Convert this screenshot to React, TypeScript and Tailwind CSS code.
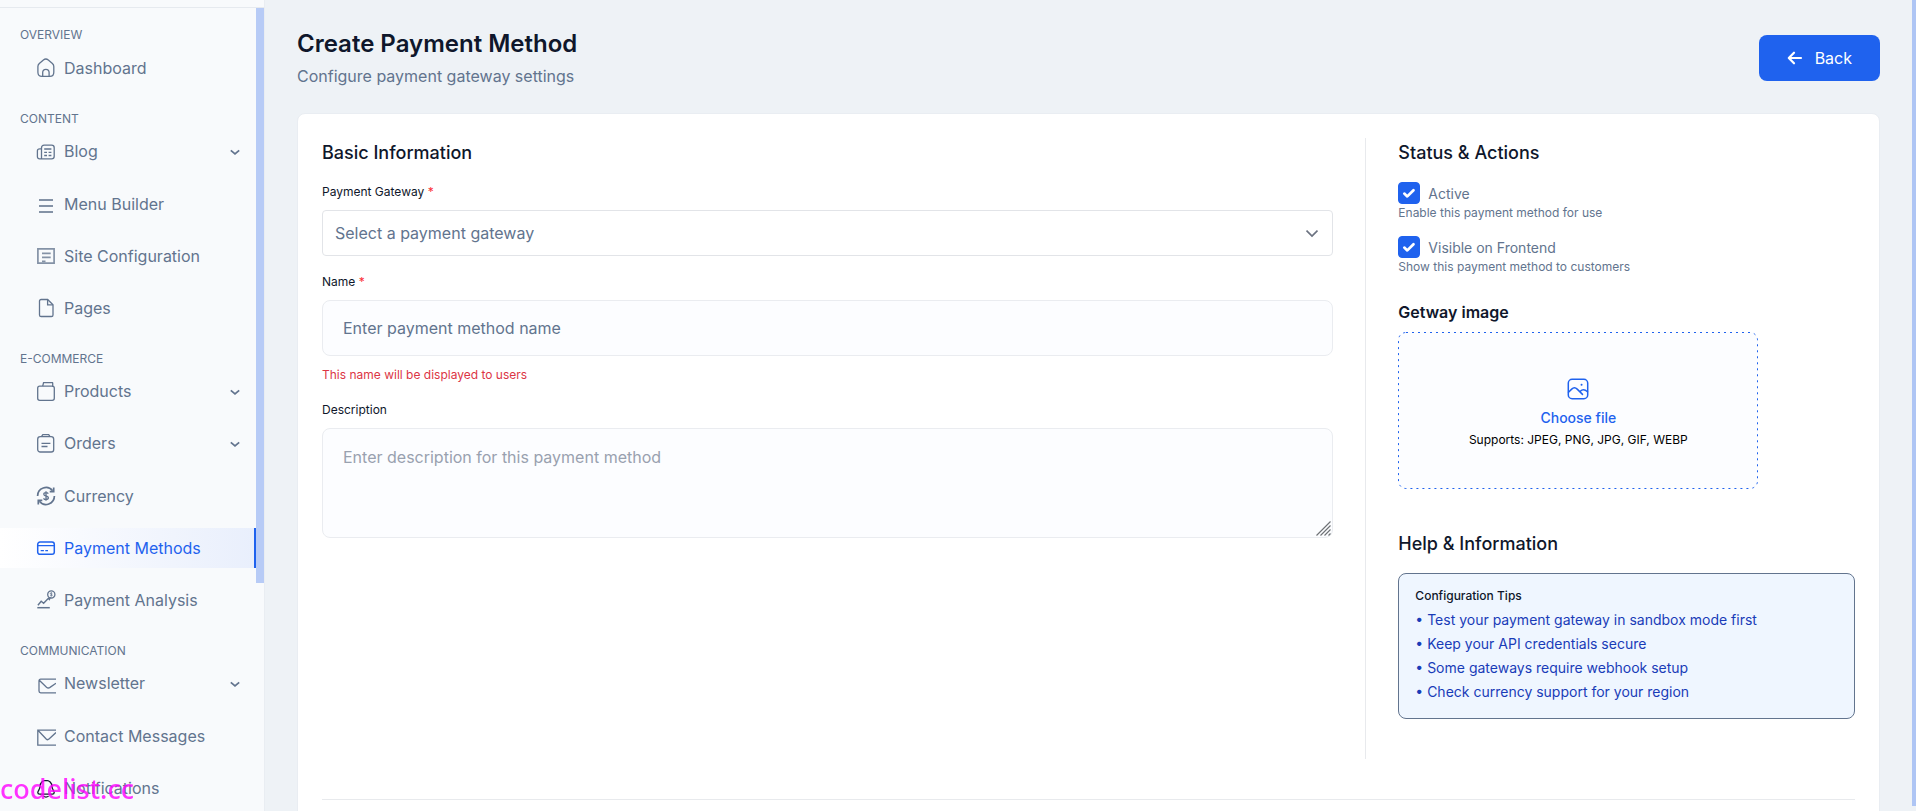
import { useState } from 'react'
import type { ReactNode } from 'react'

const icons: Record<string, ReactNode> = {
  home: (
    <>
      <path d="M1.9 8.6c0-1.2.5-2.2 1.4-3L7.4 2c1.5-1.2 3.4-1.2 4.9 0l4.1 3.6c.9.8 1.4 1.8 1.4 3v5.6c0 2.4-1.4 4.2-4 4.2H5.9c-2.600 0-4-1.800-4-4.200z" />
      <path d="M6.700 18.200v-3.700a3.200 3.200 0 0 1 6.400 0v3.700" />
    </>
  ),
  news: (
    <>
      <path d="M5.500 16.900V5.800c0-1.700 1-2.600 2.600-2.600h7.500c1.700 0 2.600.9 2.600 2.600v8.400c0 1.700-.9 2.600-2.600 2.600H3.600c-1.300 0-2.200-.9-2.200-2.300V8.800c0-1.300.8-1.900 2.300-1.900h1.800" />
      <path d="M8.200 7h7.200M8.200 10.300h2.800M12.600 10.300h2.800M8.200 13.500h2.800M12.600 13.500h2.800" />
    </>
  ),
  menu: <path d="M3 6h14M3 12h14M3 18h14" strokeWidth="1.900" />,
  site: (
    <>
      <path d="M1.900 2.800h16.200v14.400H1.900z" strokeWidth="1.700" />
      <path d="M6 7.300h8.700M6 11.300h8.700M6 15.300h3.500" strokeWidth="1.700" />
    </>
  ),
  page: (
    <>
      <path d="M11.600 1.500H5.100c-1 0-1.600.6-1.600 1.600v13.800c0 1 .6 1.600 1.600 1.600h10.300c1 0 1.600-.6 1.600-1.600V6.800z" />
      <path d="M11.600 1.500v5.300H17" />
    </>
  ),
  box: (
    <>
      <rect x="1.700" y="4.200" width="16.600" height="14.100" rx="2" />
      <path d="M6.700 4.200l.8-3.200c0-.3.300-.5.600-.5h8c.3 0 .6.200.6.600v3.800" />
    </>
  ),
  orders: (
    <>
      <rect x="1.700" y="2.700" width="16" height="15.300" rx="2.600" />
      <path d="M5.500 2.700L6.600.9c.2-.3.400-.4.700-.4h4.900c.3 0 .5.100.7.400L14 2.700M5.500 9.300h8.900M5.500 12.500h6" />
    </>
  ),
  currency: (
    <>
      <path d="M1.600 10a8.400 8.400 0 0 1 15-5.200M18.400 10a8.400 8.400 0 0 1-15 5.200" strokeWidth="1.700" />
      <path d="M17.700 1.600v4h-4M2.300 18.400v-4h4" strokeWidth="1.700" />
      <path d="M12.300 7.700c-.5-.8-1.300-1.100-2.300-1.100-1.300 0-2.200.6-2.200 1.600 0 2.400 4.600 1.200 4.600 3.600 0 1-1 1.700-2.400 1.700-1.100 0-2-.4-2.500-1.200M10 5.300v9.400" strokeWidth="1.300" />
    </>
  ),
  card: (
    <>
      <rect x="1.700" y="4.100" width="16.600" height="12.200" rx="2.300" strokeWidth="1.500" />
      <path d="M1.700 7.700h16.600M4.700 12.700h3.200M9.300 12.700h2.700" strokeWidth="1.300" />
    </>
  ),
  analysis: (
    <>
      <path d="M1.300 17.700h12.500" strokeWidth="1.500" />
      <path d="M1.900 15.300l3.300-4 2.400 1.900 4.800-5 1 1.300 1-2.300" strokeWidth="1.400" />
      <circle cx="15.300" cy="4.400" r="3.600" strokeWidth="1.300" />
      <path d="M16.300 3.200c-.8-.6-2-.3-2 .4 0 .9 2.100.6 2.100 1.500 0 .8-1.300 1-2.200.4M15.300 2.400v4" strokeWidth=".8" />
    </>
  ),
  newsletter: <path d="M20 5.200H4.700C3.600 5.200 3 5.800 3 6.900v10.200c0 1.100.6 1.700 1.700 1.700H20M3.300 6.300l7.200 7c1.200 1 2.300 1 3.500.1l6-4.100" />,
  mail: <path d="M20 4.100H1.800v15H20M1.900 4.300l8.300 8.700c.9.900 1.900.9 2.800.1l7-6.500" />,
  bell: (
    <>
      <path d="M10 2.300c-3.300 0-5.900 2.500-5.900 5.800 0 3.600-2.300 4.500-2.300 6.400 0 1 .7 1.600 1.800 1.600h12.800c1.100 0 1.800-.6 1.800-1.600 0-1.900-2.300-2.800-2.300-6.400 0-3.300-2.600-5.800-5.900-5.800z" />
      <path d="M7.400 18.300c1.600.9 3.600.9 5.200 0" />
    </>
  ),
}

const sections = [
  { title: 'OVERVIEW', items: [{ label: 'Dashboard', icon: 'home' }] },
  {
    title: 'CONTENT',
    items: [
      { label: 'Blog', icon: 'news', expandable: true },
      { label: 'Menu Builder', icon: 'menu', tone: 'text-[#8492a6]' },
      { label: 'Site Configuration', icon: 'site', tone: 'text-[#8492a6]' },
      { label: 'Pages', icon: 'page' },
    ],
  },
  {
    title: 'E-COMMERCE',
    items: [
      { label: 'Products', icon: 'box', expandable: true },
      { label: 'Orders', icon: 'orders', expandable: true },
      { label: 'Currency', icon: 'currency' },
      { label: 'Payment Methods', icon: 'card', active: true },
      { label: 'Payment Analysis', icon: 'analysis' },
    ],
  },
  {
    title: 'COMMUNICATION',
    items: [
      { label: 'Newsletter', icon: 'newsletter', expandable: true },
      { label: 'Contact Messages', icon: 'mail' },
      { label: 'Notifications', icon: 'bell', tone: 'text-slate-900' },
    ],
  },
]

interface NavItemProps {
  label: string
  icon: string
  tone?: string
  active?: boolean
  expandable?: boolean
}

function NavItem({ label, icon, tone = '', active, expandable }: NavItemProps) {
  const glyph = (
    <svg className={`size-5 shrink-0 ${tone}`} viewBox="0 0 20 20" fill="none" stroke="currentColor" strokeWidth="1.3" aria-hidden="true">
      {icons[icon]}
    </svg>
  )

  if (expandable) {
    return (
      <button type="button" aria-expanded="false" className="flex h-10 w-full items-center gap-2 pl-9 pr-4 text-left">
        {glyph}
        <span className="flex-1 pb-0.5">{label}</span>
        <svg className="size-2.5" viewBox="0 0 10 10" fill="none" stroke="currentColor" strokeWidth="1.7" aria-hidden="true">
          <path d="M.8 3.300L5 6.900l4.200-3.600" />
        </svg>
      </button>
    )
  }

  return (
    <a
      href="#"
      aria-current={active ? 'page' : undefined}
      className={`flex h-10 items-center gap-2 pl-9 ${active ? 'border-r-2 border-[#1f62ee] bg-linear-to-r from-white to-[#e9effc] text-[#1f62ee]' : ''}`}
    >
      {glyph}
      {label}
    </a>
  )
}

function Sidebar() {
  return (
    <aside className="flex w-[265px] shrink-0 flex-col border-r border-[#e9edf2] bg-[#f8fafc] text-slate-500">
      <div className="h-2 shrink-0 border-b border-[#e6eaef]" />
      <div className="flex min-h-0 flex-1">
        <nav className="flex-1 overflow-hidden pt-3.5">
          {sections.map(({ title, items }) => (
            <section key={title} className="mb-4.5">
              <h2 className="pl-5 text-xs leading-[26px]">{title}</h2>
              <ul className="space-y-3">
                {items.map((item) => (
                  <li key={item.label}>
                    <NavItem {...item} />
                  </li>
                ))}
              </ul>
            </section>
          ))}
        </nav>
        <div className="h-[575px] w-2 bg-[#b7cbf6]" />
      </div>
    </aside>
  )
}

interface ToggleProps {
  id: string
  label: string
  hint: string
}

function Toggle({ id, label, hint }: ToggleProps) {
  const [checked, setChecked] = useState(true)
  return (
    <div>
      <div className="flex h-[22px] items-center gap-2">
        <span className="grid">
          <input
            id={id}
            type="checkbox"
            checked={checked}
            onChange={(e) => setChecked(e.target.checked)}
            className="col-start-1 row-start-1 size-[22px] appearance-none rounded border border-slate-300 checked:border-[#1f62ee] checked:bg-[#1f62ee]"
          />
          {checked && (
            <svg className="pointer-events-none col-start-1 row-start-1 size-[22px]" viewBox="0 0 22 22" fill="none" stroke="white" strokeWidth="2.700" strokeLinecap="round" strokeLinejoin="round" aria-hidden="true">
              <path d="M6.300 11.600l3 2.800 6.200-6.200" />
            </svg>
          )}
        </span>
        <label htmlFor={id} className="pt-0.5 text-sm leading-5 text-slate-500">{label}</label>
      </div>
      <p className="text-xs leading-[18px] text-slate-500">{hint}</p>
    </div>
  )
}

const tips = [
  'Test your payment gateway in sandbox mode first',
  'Keep your API credentials secure',
  'Some gateways require webhook setup',
  'Check currency support for your region',
]

function BasicInformation() {
  return (
    <div className="col-span-2">
      <h2 className="mb-3.5 text-lg font-medium leading-[30px]">Basic Information</h2>
      <div className="space-y-4">
        <div>
          <label htmlFor="gateway" className="mb-2 block text-xs leading-5">
            Payment Gateway <span className="text-red-500">*</span>
          </label>
          <div className="grid items-center">
            <select id="gateway" defaultValue="" className="col-start-1 row-start-1 h-[46px] w-full appearance-none rounded border border-[#e2e4e8] bg-white px-3 text-base text-slate-500">
              <option value="">Select a payment gateway</option>
            </select>
            <svg className="pointer-events-none col-start-1 row-start-1 mr-[15px] size-3 justify-self-end" viewBox="0 0 12 12" fill="none" stroke="#6b7280" strokeWidth="1.700" aria-hidden="true">
              <path d="M.5 3.500L6 9l5.500-5.500" />
            </svg>
          </div>
        </div>
        <div>
          <label htmlFor="name" className="mb-2 block text-xs leading-5">
            Name <span className="text-red-500">*</span>
          </label>
          <input id="name" type="text" placeholder="Enter payment method name" className="block h-14 w-full rounded-lg border border-[#eaecf0] bg-[#fcfdff] px-5 text-base placeholder:text-slate-500" />
          <p className="mt-2.5 text-xs leading-[18px] text-[#dc3545]">This name will be displayed to users</p>
        </div>
        <div>
          <label htmlFor="description" className="mb-2 block text-xs leading-5">Description</label>
          <div className="grid">
            <textarea id="description" placeholder="Enter description for this payment method" className="col-start-1 row-start-1 h-[110px] w-full resize-none rounded-lg border border-[#eaecf0] bg-[#fcfdff] px-5 py-4 text-base placeholder:text-gray-400" />
            <svg className="pointer-events-none col-start-1 row-start-1 mb-0.5 mr-0.5 size-[15px] self-end justify-self-end" viewBox="0 0 15 15" fill="none" stroke="#6f7276" strokeWidth="1.200" aria-hidden="true">
              <path d="M.5 14.500l14-14M4.500 14.500l10-10M8.500 14.500l6-6M12.500 14.500l2-2" />
            </svg>
          </div>
        </div>
      </div>
    </div>
  )
}

function StatusPanel() {
  return (
    <div className="border-l border-[#e8eaed] pb-10 pl-8">
      <h2 className="mb-3.5 text-lg font-medium leading-[30px]">Status &amp; Actions</h2>
      <div className="space-y-3.5">
        <Toggle id="active" label="Active" hint="Enable this payment method for use" />
        <Toggle id="visible" label="Visible on Frontend" hint="Show this payment method to customers" />
      </div>

      <h3 className="mb-2 mt-6 text-base font-semibold leading-6">Getway image</h3>
      <label htmlFor="image" className="relative flex h-[157px] max-w-[360px] cursor-pointer flex-col items-center justify-center rounded-lg bg-[#fcfdff] pt-1">
        <svg className="absolute inset-0 size-full text-[#1f62ee]" fill="none" stroke="currentColor" aria-hidden="true">
          <rect x=".5" y=".5" rx="7.500" strokeDasharray="2 4" className="h-[calc(100%-1px)] w-[calc(100%-1px)]" />
        </svg>
        <svg className="mb-2 size-[22px] text-[#1f62ee]" viewBox="0 0 22 22" fill="none" stroke="currentColor" strokeWidth="1.500" strokeLinecap="round" aria-hidden="true">
          <rect x="1.300" y="1.300" width="19.400" height="19.400" rx="3.800" />
          <path d="M1.500 14.300l3.200-3.200c1.800-1.800 3.700-1.800 5.500 0l5.300 5.300M13.300 13.300c1.900-2 4.300-2.200 7.200.4" />
          <path d="M14.500 6.700h.1" strokeWidth="1.900" />
        </svg>
        <span className="text-sm font-medium leading-5 text-[#1f62ee]">Choose file</span>
        <span className="mt-1 text-xs leading-4 text-black">Supports: JPEG, PNG, JPG, GIF, WEBP</span>
        <input id="image" type="file" className="sr-only" />
      </label>

      <h2 className="mb-3.5 mt-10 text-lg font-medium leading-[30px]">Help &amp; Information</h2>
      <div className="rounded-lg border border-slate-500 bg-blue-50 p-4">
        <h3 className="mb-2 text-xs font-medium leading-3">Configuration Tips</h3>
        <ul className="space-y-1 text-sm text-blue-800">
          {tips.map((tip) => (
            <li key={tip}>• {tip}</li>
          ))}
        </ul>
      </div>
    </div>
  )
}

export default function App() {
  return (
    <div className="flex h-screen overflow-hidden bg-[#eef2f6] font-['Inter',sans-serif] text-base text-slate-900">
      <Sidebar />
      <main className="min-w-0 flex-1 overflow-hidden px-8 pt-7">
        <header className="mb-[25px] flex items-center justify-between">
          <div>
            <h1 className="text-2xl font-semibold leading-8">Create Payment Method</h1>
            <p className="mt-1 text-slate-500">Configure payment gateway settings</p>
          </div>
          <button type="button" className="flex h-[46px] items-center gap-3 rounded-lg bg-[#1f62ee] px-7 text-white">
            <svg className="size-4" viewBox="0 0 16 16" fill="none" stroke="currentColor" strokeWidth="2.200" strokeLinecap="round" strokeLinejoin="round" aria-hidden="true">
              <path d="M14 8H2M7 2.700L1.800 8 7 13.300" />
            </svg>
            Back
          </button>
        </header>

        <form className="rounded-lg border border-[#e9edf2] bg-white p-6">
          <div className="grid grid-cols-3 gap-8">
            <BasicInformation />
            <StatusPanel />
          </div>
          <hr className="mb-16 mt-10 border-[#e8eaed]" />
        </form>
      </main>
      <div className="h-[806px] w-1 shrink-0 bg-[#aec5f4]" />
      <span className="pointer-events-none fixed bottom-1 left-0 font-['Noto_Sans',sans-serif] text-[27px] font-medium leading-9 text-[#ff00ff] opacity-80">codelist.cc</span>
    </div>
  )
}
